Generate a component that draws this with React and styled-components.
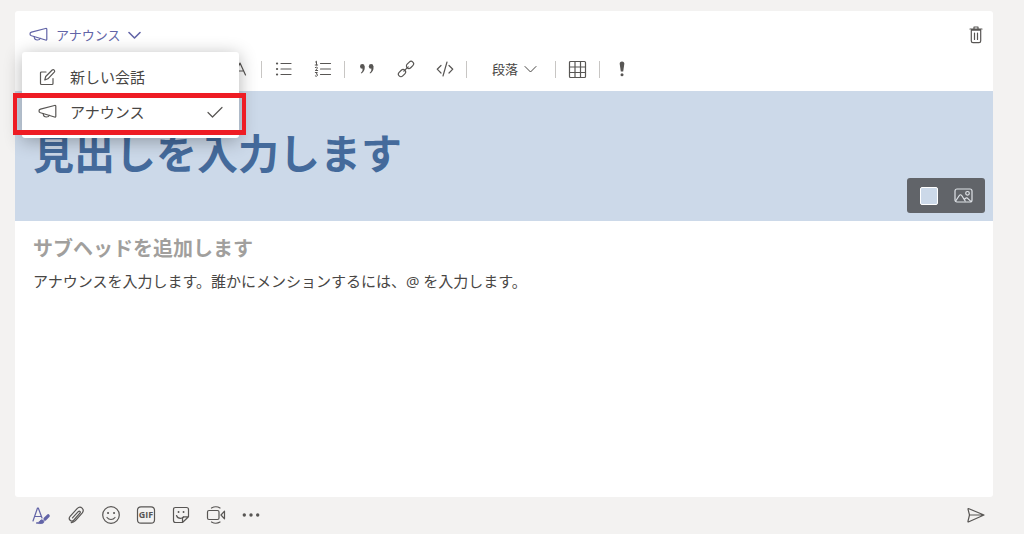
import React, { useState } from "react";
import styled, { createGlobalStyle, css } from "styled-components";

const color = {
  page: "#f3f2f1",
  ink: "#484644",
  icon: "#585654",
  purple: "#6264a7",
  banner: "#ccd9e9",
  heading: "#446a9b",
  red: "#ee1c24",
};

const GlobalStyle = createGlobalStyle`
  *, *::before, *::after { box-sizing: border-box; }
  body {
    margin: 0;
    background: ${color.page};
    color: ${color.ink};
    font-family: "Open Sans", "Noto Sans CJK JP", sans-serif;
  }
  button, input, textarea, select { font-family: inherit; color: inherit; }
`;

const Page = styled.div`
  display: flex;
  flex-direction: column;
  min-height: 100vh;
  padding: 11px 31px 0 15px;
`;

const Card = styled.main`
  flex: 1;
  display: flex;
  flex-direction: column;
  background: #fff;
  border-radius: 3px;
`;

const Header = styled.header`
  display: flex;
  align-items: center;
  justify-content: space-between;
  height: 48px;
  padding-left: 14px;
`;

const TypePicker = styled.div`
  position: relative;
`;

const TypeButton = styled.button`
  display: flex;
  align-items: center;
  gap: 8px;
  height: 24px;
  padding: 0;
  border: 0;
  background: none;
  color: ${color.purple};
  font-size: 13px;
  line-height: 24px;
  cursor: pointer;
`;

const Menu = styled.div`
  position: absolute;
  z-index: 2;
  top: 29px;
  left: -7px;
  width: 217px;
  padding: 8px 0;
  background: #fff;
  border-radius: 3px;
  box-shadow: 0 3px 18px rgba(0, 0, 0, 0.3);
`;

const MenuItem = styled.button`
  position: relative;
  display: flex;
  align-items: center;
  gap: 13px;
  width: 100%;
  height: 35px;
  padding: 0 15px 2px 16px;
  border: 0;
  background: none;
  font-size: 15px;
  text-align: left;
  cursor: pointer;

  svg { color: ${color.icon}; }

  ${(p) =>
    p.$marked &&
    css`
      &::after {
        content: "";
        position: absolute;
        inset: -2px -7px -5px -9px;
        border: solid ${color.red};
        border-width: 5px 4px;
        pointer-events: none;
      }
    `}
`;

const MenuLabel = styled.span`
  flex: 1;
`;

const Toolbar = styled.div`
  display: flex;
  align-items: center;
  padding: 0 10px 12px;
`;

const ToolButton = styled.button`
  display: flex;
  align-items: center;
  justify-content: center;
  flex: none;
  width: 39px;
  height: 20px;
  padding: 0;
  border: 0;
  background: none;
  cursor: pointer;

  svg { color: ${color.icon}; }
`;

const Divider = styled.span`
  width: 1px;
  height: 17px;
  margin: 0 2px;
  background: #c8c6c4;
`;

const StyleField = styled.label`
  display: flex;
  align-items: center;
  gap: 4px;
  width: 84px;
  padding-left: 23px;
`;

const StyleSelect = styled.select`
  appearance: none;
  width: 28px;
  height: 20px;
  padding: 0;
  border: 0;
  background: none;
  font-size: 13px;
`;

const Banner = styled.section`
  display: flex;
  align-items: center;
  height: 130px;
  padding: 2px 8px 8px 18px;
  background: ${color.banner};
`;

const field = css`
  min-width: 0;
  padding: 0;
  border: 0;
  outline: 0;
  background: none;
`;

const HeadingInput = styled.input`
  ${field}
  flex: 1;
  height: 60px;
  font-size: 41px;
  font-weight: 700;
  color: ${color.heading};
  &::placeholder { color: ${color.heading}; opacity: 1; }
`;

const BannerTools = styled.div`
  display: flex;
  align-items: center;
  align-self: flex-end;
  height: 35px;
  padding: 0 4px;
  background: #616469;
  border-radius: 3px;
`;

const BannerButton = styled(ToolButton)`
  width: 35px;
  height: 35px;

  svg { color: #dfe3e8; }
`;

const Swatch = styled.span`
  width: 18px;
  height: 18px;
  border: 1px solid #fff;
  border-radius: 2px;
  background: ${color.banner};
`;

const Body = styled.section`
  flex: 1;
  display: flex;
  flex-direction: column;
  padding: 12px 18px;
`;

const SubheadInput = styled.input`
  ${field}
  height: 30px;
  font-size: 20px;
  font-weight: 700;
  &::placeholder { color: #a19f9d; opacity: 1; }
`;

const MessageInput = styled.textarea`
  ${field}
  flex: 1;
  margin-top: 6px;
  resize: none;
  font-size: 15px;
  line-height: 24px;
  &::placeholder { color: ${color.ink}; opacity: 1; }
`;

const Footer = styled.footer`
  display: flex;
  align-items: center;
  height: 37px;
  padding: 0 0 2px 8px;
`;

const FooterButton = styled(ToolButton)`
  width: 35px;
  height: 35px;

  svg { color: ${(p) => (p.$active ? color.purple : color.icon)}; }
`;

const Spacer = styled.span`
  flex: 1;
`;

function Icon({ w = 20, h = 20, sw = 1.2, children }) {
  return (
    <svg
      width={w}
      height={h}
      viewBox={`0 0 ${w} ${h}`}
      fill="none"
      stroke="currentColor"
      strokeWidth={sw}
      strokeLinecap="round"
      strokeLinejoin="round"
      aria-hidden="true"
    >
      {children}
    </svg>
  );
}

const Megaphone = () => (
  <Icon w={19} h={16}>
    <path d="M16.500 1.500q1.300-.3 1.300.8v9.900q0 1.100-1.300.8L2.500 8.700Q1 8.200 1 6.900 1 5.600 2.500 5.200Z" />
    <path d="M5.200 9.700Q5.500 13 8.400 13Q10.700 13 11.300 11.400" />
  </Icon>
);

const Compose = () => (
  <Icon w={19} h={18}>
    <path d="M8 4H3.500Q2.500 4 2.500 5v10.500q0 1 1 1h10.500q1 0 1-1V10.500" />
    <path d="M6.800 12l.9-3.500L14.200 2q1-.8 2 .1 1 1 .1 2L9.900 10.800Z" />
  </Icon>
);

const Chevron = ({ sw }) => (
  <Icon w={13} h={12} sw={sw}>
    <path d="M1 3.500l5.500 5.500L12 3.500" />
  </Icon>
);

const Check = () => (
  <Icon w={18} h={16}>
    <path d="M2 8.500l4.500 4.500L16 3.500" />
  </Icon>
);

const Trash = () => (
  <Icon w={16} h={20}>
    <path d="M2 4h12M6 3.500V2h4v1.500M3.300 5.200V16q0 1.700 1.700 1.700h6q1.700 0 1.700-1.700V5.200ZM6.500 8v6.500M9.500 8v6.500" />
  </Icon>
);

const Bold = () => (
  <Icon sw={1.6}>
    <path d="M6 4v12h5q3 0 3-3t-3-3H6h4q3 0 3-3t-3-3Z" />
  </Icon>
);
const Italic = () => (
  <Icon>
    <path d="M9 4h5M6 16h5M11.500 4l-3 12" />
  </Icon>
);
const Underline = () => (
  <Icon>
    <path d="M6 3v6q0 4 4 4t4-4V3M5 17h10" />
  </Icon>
);
const Strike = () => (
  <Icon>
    <path d="M14 5q-2-2-5-1.500-4 1-2 4 1 1 4 2.500 5 3 1 6-4 2-7-1M3 10h14" />
  </Icon>
);
const Marker = () => (
  <Icon>
    <path d="M4 16h12M7 12l7-9 2 2-7 8H7Z" />
  </Icon>
);
const FontColor = () => (
  <Icon w={14} h={16}>
    <path d="M1.500 14L7 2l5.500 12M3.500 10h7" />
  </Icon>
);
const Bullets = () => (
  <Icon w={18} h={16}>
    <path d="M6 2.500h10M6 8h10M6 13.500h10" />
    <path strokeWidth="2.200" d="M2 2.500h.1M2 8h.1M2 13.500h.1" />
  </Icon>
);
const Numbers = () => (
  <Icon w={18} h={18} sw={1}>
    <path strokeWidth="1.200" d="M6.500 3.500h10M6.500 9h10M6.500 14.500h10" />
    <path d="M1.500 2l1-.8V5M1.200 5h2.500M1.300 7.500q1.200-.8 2 0t-2 3h2.400M1.300 12.500h2l-1 1.600q1.600.1 1.200 1.400-.7 1.300-2.200.5" />
  </Icon>
);
const Quote = () => (
  <Icon w={16} h={14} sw={1}>
    <g fill="currentColor" stroke="none">
      <circle cx="3.300" cy="4.400" r="2.300" />
      <path d="M5.600 4.200q.7 4.800-3.300 7.300l-.5-.6q2.300-2.500 1.900-5Z" />
      <circle cx="12.100" cy="4.400" r="2.300" />
      <path d="M14.400 4.200q.7 4.800-3.300 7.300l-.5-.6q2.300-2.500 1.900-5Z" />
    </g>
  </Icon>
);
const Link = () => (
  <Icon w={18} h={18}>
    <rect x="9" y="2.400" width="8" height="5" rx="2.500" transform="rotate(-45 13 4.900)" />
    <rect x="1" y="10.600" width="8" height="5" rx="2.500" transform="rotate(-45 5 13.100)" />
    <path d="M6.800 11.200l4.400-4.400" />
  </Icon>
);
const Code = () => (
  <Icon w={18} h={18}>
    <path d="M5 5.500L1.200 9.200 5 13M13 5.500l3.800 3.700L13 13M11 2L7 16" />
  </Icon>
);
const Grid = () => (
  <Icon w={19} h={19}>
    <rect x="1.500" y="1.500" width="16" height="16" rx="1" />
    <path d="M1.500 7h16M1.500 12.500h16M7 1.500v16M12.500 1.500v16" />
  </Icon>
);
const Important = () => (
  <Icon w={8} h={18}>
    <path fill="currentColor" stroke="none" d="M4 1.500q2.500 0 2.300 2.500L5.200 11.500H2.800L1.700 4Q1.500 1.500 4 1.500Z" />
    <circle fill="currentColor" stroke="none" cx="4" cy="14.700" r="1.500" />
  </Icon>
);
const Picture = () => (
  <Icon w={19} h={15}>
    <rect x="1" y="1" width="17" height="13" rx="2" />
    <path d="M2 12.500l3.300-5q1.200-1.500 2.400 0l3.500 5.500M10.300 11.500l1.500-1.400q.8-.6 1.600 0l3.200 3" />
    <circle cx="13.500" cy="5.300" r="1.800" />
  </Icon>
);
const Format = () => (
  <Icon w={20} h={20}>
    <path d="M2 16L6.500 3h.8L11 13M3.500 11.500h6.500" />
    <path strokeWidth="3.200" d="M14 14l3.200-3.200" />
    <path fill="currentColor" strokeWidth=".8" d="M5.500 18q2.200 0 3.300-2 1.400-2 3.400-.7 1.300 1.300.3 2.500-1.200 1-4 .8Z" />
  </Icon>
);
const Clip = () => (
  <Icon>
    <path d="M6.500 12.800l5.700-6.100q1-.9 1.700-.2.800.8 0 1.700l-6 6.800q-1.900 2-3.800.3-1.800-1.900 0-3.900l7-7.700q2.600-2.600 5-.6 2.300 2.400 0 5.100l-6.700 7.500q-1.900 2-4.200 1.900" />
  </Icon>
);
const Smile = () => (
  <Icon>
    <circle cx="10" cy="10" r="8.300" />
    <path d="M6 12.500q1.500 2 4 2t4-2" />
    <path strokeWidth="2" d="M7 8h.1M13 8h.1" />
  </Icon>
);
const Gif = () => (
  <Icon>
    <rect x="1.500" y="1.800" width="17" height="16.400" rx="3.500" />
    <text
      x="10"
      y="13.300"
      textAnchor="middle"
      fill="currentColor"
      stroke="none"
      fontFamily="Open Sans, sans-serif"
      fontSize="9"
      fontWeight="700"
    >
      GIF
    </text>
  </Icon>
);
const Sticker = () => (
  <Icon>
    <path d="M4.500 2.500h11q2 0 2 2v7.300l-6 5.700h-7q-2 0-2-2v-11q0-2 2-2ZM11.500 17.500v-3.700q0-2 2-2h4" />
    <path d="M5.500 10.500q1 2.800 4 2.800M9.500 13.300q2-.1 3-1.500" />
    <path strokeWidth="1.800" d="M7.500 7h.1M12.500 7h.1" />
  </Icon>
);
const Meet = () => (
  <Icon>
    <rect x="1.500" y="5.500" width="11.500" height="9" rx="1.500" />
    <path d="M15 10l3.500-3.800v7.600ZM5.500 3Q10 .5 14 3M5.500 17q4.500 2.500 8.500 0" />
  </Icon>
);
const More = () => (
  <Icon>
    <g fill="currentColor" stroke="none">
      <circle cx="3.300" cy="10" r="1.700" />
      <circle cx="10" cy="10" r="1.700" />
      <circle cx="16.700" cy="10" r="1.700" />
    </g>
  </Icon>
);
const Send = () => (
  <Icon>
    <path d="M2.300 3.500L18 10 2.300 17Q1.800 17 2 16.200L3.500 10 2 4.200Q1.900 3.500 2.300 3.500ZM3.500 10H18" />
  </Icon>
);

const fontTools = [
  ["太字", Bold],
  ["斜体", Italic],
  ["下線", Underline],
  ["取り消し線", Strike],
  ["蛍光ペン", Marker],
  ["フォントの色", FontColor],
];
const listTools = [
  ["箇条書き", Bullets],
  ["番号付きリスト", Numbers],
];
const insertTools = [
  ["引用", Quote],
  ["リンク", Link],
  ["コード", Code],
];
const footerTools = [
  ["書式", Format, true],
  ["添付", Clip],
  ["絵文字", Smile],
  ["GIF", Gif],
  ["ステッカー", Sticker],
  ["会議", Meet],
  ["その他", More],
];

const Tools = ({ items }) =>
  items.map(([label, Glyph]) => (
    <ToolButton key={label} type="button" aria-label={label}>
      <Glyph />
    </ToolButton>
  ));

export default function App() {
  const [open, setOpen] = useState(true);
  return (
    <>
      <GlobalStyle />
      <Page>
        <Card>
          <Header>
            <TypePicker>
              <TypeButton type="button" aria-haspopup="menu" aria-expanded={open} onClick={() => setOpen(!open)}>
                <Megaphone />
                アナウンス
                <Chevron sw={1.6} />
              </TypeButton>
              {open && (
                <Menu role="menu">
                  <MenuItem type="button" role="menuitemradio" aria-checked="false">
                    <Compose />
                    <MenuLabel>新しい会話</MenuLabel>
                  </MenuItem>
                  <MenuItem type="button" role="menuitemradio" aria-checked="true" $marked>
                    <Megaphone />
                    <MenuLabel>アナウンス</MenuLabel>
                    <Check />
                  </MenuItem>
                </Menu>
              )}
            </TypePicker>
            <FooterButton type="button" aria-label="削除">
              <Trash />
            </FooterButton>
          </Header>
          <Toolbar role="toolbar">
            <Tools items={fontTools} />
            <Divider />
            <Tools items={listTools} />
            <Divider />
            <Tools items={insertTools} />
            <Divider />
            <StyleField>
              <StyleSelect aria-label="スタイル" defaultValue="p">
                <option value="p">段落</option>
              </StyleSelect>
              <Chevron sw={1} />
            </StyleField>
            <Divider />
            <Tools items={[["表", Grid]]} />
            <Divider />
            <Tools items={[["重要", Important]]} />
          </Toolbar>
          <Banner>
            <HeadingInput aria-label="見出し" placeholder="見出しを入力します" />
            <BannerTools>
              <BannerButton type="button" aria-label="配色">
                <Swatch />
              </BannerButton>
              <BannerButton type="button" aria-label="画像">
                <Picture />
              </BannerButton>
            </BannerTools>
          </Banner>
          <Body>
            <SubheadInput aria-label="サブヘッド" placeholder="サブヘッドを追加します" />
            <MessageInput
              aria-label="本文"
              placeholder="アナウンスを入力します。誰かにメンションするには、@ を入力します。"
            />
          </Body>
        </Card>
        <Footer>
          {footerTools.map(([label, Glyph, active]) => (
            <FooterButton key={label} type="button" aria-label={label} $active={active}>
              <Glyph />
            </FooterButton>
          ))}
          <Spacer />
          <FooterButton type="button" aria-label="送信">
            <Send />
          </FooterButton>
        </Footer>
      </Page>
    </>
  );
}
